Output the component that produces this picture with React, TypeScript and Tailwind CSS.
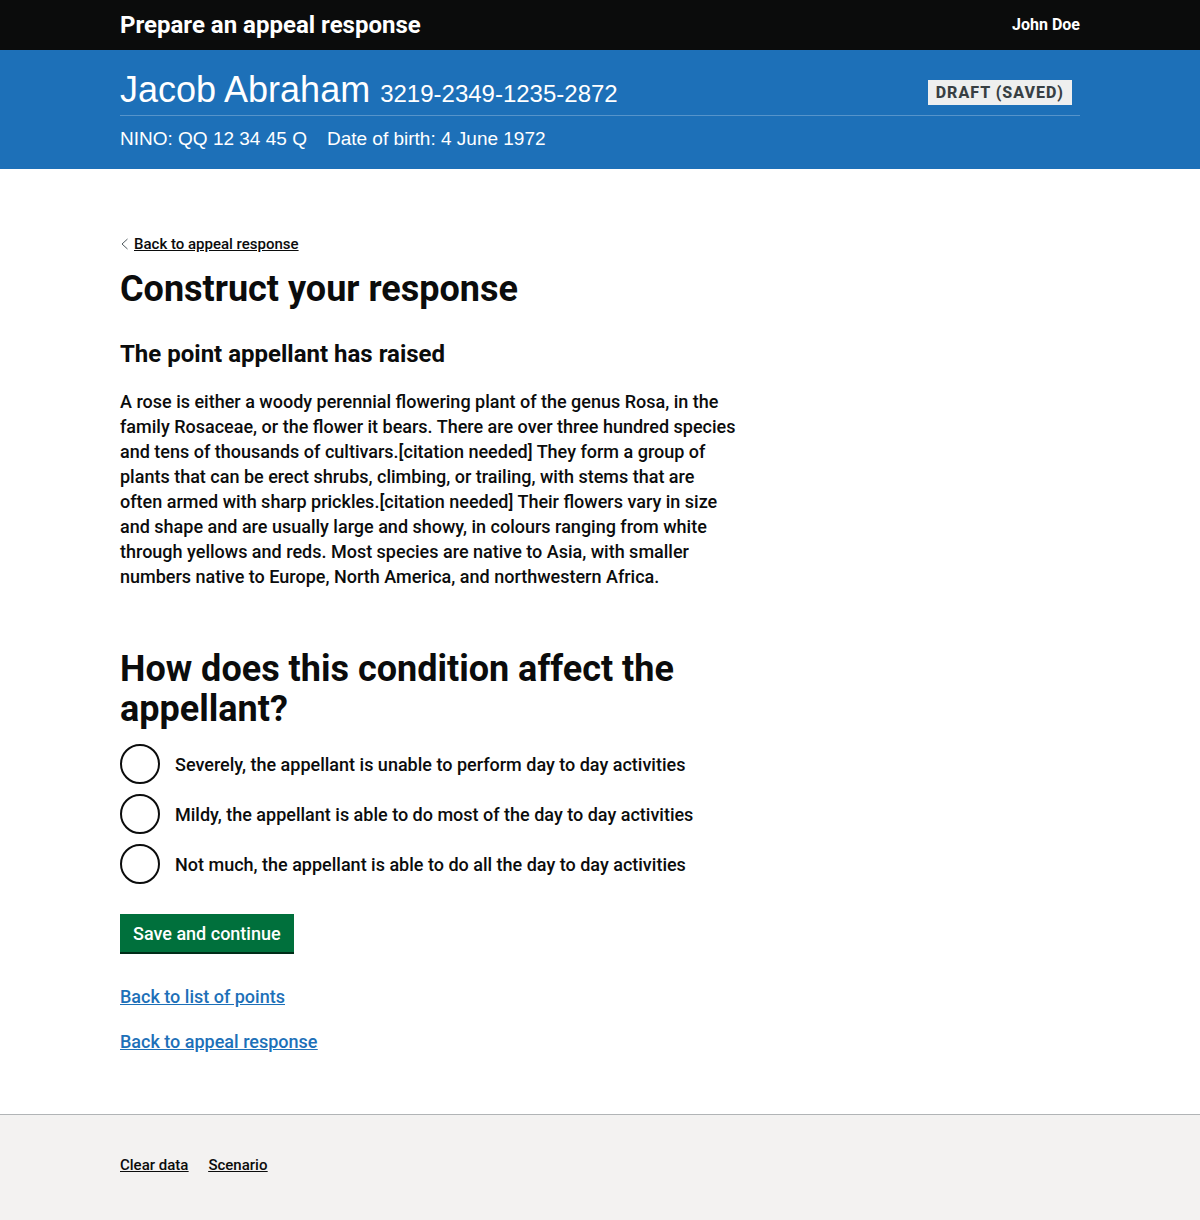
import { useState } from "react";

const options = [
  "Severely, the appellant is unable to perform day to day activities",
  "Mildy, the appellant is able to do most of the day to day activities",
  "Not much, the appellant is able to do all the day to day activities",
];

function Header() {
  return (
    <header className="bg-[#0b0c0c] text-white">
      <div className="mx-auto flex h-[50px] max-w-[960px] items-center justify-between">
        <span className="text-[24px] leading-[30px] font-bold">Prepare an appeal response</span>
        <span className="text-[16px] leading-[20px] font-bold">John Doe</span>
      </div>
    </header>
  );
}

function CaseBanner() {
  return (
    <section aria-label="Appellant" className="bg-[#1d70b8] pt-5 pb-[18px] font-['Liberation_Sans',Arial,sans-serif] text-white">
      <div className="mx-auto max-w-[960px]">
        <div className="flex items-center justify-between border-b border-[#5694ca] pr-2 pb-[5px]">
          <p className="text-[36px] leading-[40px]">
            Jacob Abraham <span className="text-[24px] leading-[24px]">3219-2349-1235-2872</span>
          </p>
          <strong className="mt-[5px] bg-[#eeefef] px-2 pt-[5px] pb-1 font-[Roboto,sans-serif] text-[16px] leading-[16px] font-extrabold tracking-[1px] text-[#383f43] uppercase">
            Draft (saved)
          </strong>
        </div>
        <div className="mt-[10px] flex gap-5 text-[19px] leading-[25px]">
          <span>NINO: QQ 12 34 45 Q</span>
          <span>Date of birth: 4 June 1972</span>
        </div>
      </div>
    </section>
  );
}

function ResponseForm() {
  const [selected, setSelected] = useState("");
  return (
    <form className="mt-[60px]" onSubmit={(event) => event.preventDefault()}>
      <fieldset>
        <legend className="mb-[15px] text-[36px] leading-[40px] font-bold">
          How does this condition affect the appellant?
        </legend>
        <div className="flex flex-col gap-[10px]">
          {options.map((option, index) => (
            <div key={option} className="flex items-center">
              <input
                id={`affect-${index}`}
                type="radio"
                name="affect"
                value={option}
                checked={selected === option}
                onChange={() => setSelected(option)}
                className="size-10 shrink-0 appearance-none rounded-full border-2 border-[#0b0c0c] bg-white checked:bg-[#0b0c0c] checked:bg-clip-content checked:p-2"
              />
              <label htmlFor={`affect-${index}`} className="px-[15px] text-[18px] leading-[25px]">
                {option}
              </label>
            </div>
          ))}
        </div>
      </fieldset>
      <button
        type="submit"
        className="mt-[30px] border-b-2 border-[#002d18] bg-[#00703c] px-[13px] pt-[7px] pb-[6px] text-[18px] leading-[25px] font-medium text-white"
      >
        Save and continue
      </button>
    </form>
  );
}

export default function App() {
  return (
    <div className="flex min-h-screen flex-col bg-[#f3f2f1] font-[Roboto,sans-serif] font-medium text-[#0b0c0c]">
      <Header />
      <CaseBanner />
      <main className="border-b border-[#b1b4b6] bg-white pt-[65px] pb-[60px]">
        <div className="mx-auto max-w-[960px]">
          <div className="max-w-[630px]">
            <a href="#response" className="flex items-center gap-[5px] text-[15px] leading-[20px]">
              <svg aria-hidden="true" viewBox="0 0 9 12" className="h-3 w-[9px]" fill="none" stroke="#505a5f">
                <path d="M7.5 1 L2 6 L7.5 11" />
              </svg>
              <span className="underline">Back to appeal response</span>
            </a>
            <h1 className="mt-[15px] text-[36px] leading-[40px] font-bold">Construct your response</h1>
            <h2 className="mt-[30px] text-[24px] leading-[30px] font-bold">The point appellant has raised</h2>
            <p className="mt-5 max-w-[620px] text-[18px] leading-[25px]">
              A rose is either a woody perennial flowering plant of the genus Rosa, in the family Rosaceae, or the
              flower it bears. There are over three hundred species and tens of thousands of cultivars.[citation
              needed] They form a group of plants that can be erect shrubs, climbing, or trailing, with stems that are
              often armed with sharp prickles.[citation needed] Their flowers vary in size and shape and are usually
              large and showy, in colours ranging from white through yellows and reds. Most species are native to Asia,
              with smaller numbers native to Europe, North America, and northwestern Africa.
            </p>
            <ResponseForm />
            <nav aria-label="Back" className="mt-[30px] flex flex-col items-start gap-5 text-[18px] leading-[25px] text-[#1d70b8] underline">
              <a href="#points">Back to list of points</a>
              <a href="#response">Back to appeal response</a>
            </nav>
          </div>
        </div>
      </main>
      <footer className="py-10">
        <nav aria-label="Footer" className="mx-auto flex max-w-[960px] gap-5 text-[15px] leading-[20px] underline">
          <a href="#clear">Clear data</a>
          <a href="#scenario">Scenario</a>
        </nav>
      </footer>
    </div>
  );
}
